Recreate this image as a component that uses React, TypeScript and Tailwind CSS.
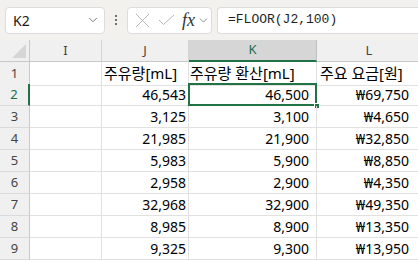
import { ChevronDown } from 'lucide-react';

const rows = [
    { n: 1, j: '주유량[mL]', k: '주유량 환산[mL]', l: '주요 요금[원]', head: true },
    { n: 2, j: '46,543', k: '46,500', l: '₩69,750' },
    { n: 3, j: '3,125', k: '3,100', l: '₩4,650' },
    { n: 4, j: '21,985', k: '21,900', l: '₩32,850' },
    { n: 5, j: '5,983', k: '5,900', l: '₩8,850' },
    { n: 6, j: '2,958', k: '2,900', l: '₩4,350' },
    { n: 7, j: '32,968', k: '32,900', l: '₩49,350' },
    { n: 8, j: '8,985', k: '8,900', l: '₩13,350' },
    { n: 9, j: '9,325', k: '9,300', l: '₩13,950' },
];

const cellFont = { fontFamily: '"Noto Sans", "Noto Sans CJK KR", sans-serif' };

function FormulaBar() {
    return (
        <div className="flex items-center h-10 bg-[#f3f1ee] pl-[5px]">
            {/* Name box */}
            <div className="flex items-center justify-between w-[100px] h-[27px] bg-white border border-[#dcdcdc] rounded-[4px] pl-[7px] pr-[4px]">
                <span className="text-[14px] text-[#1b1b1b]" style={cellFont}>K2</span>
                <ChevronDown className="w-[14px] h-[14px] text-[#666]" strokeWidth={1.5} />
            </div>

            {/* Dots */}
            <div className="flex flex-col items-center gap-[2px] w-[22px]">
                <span className="w-[2px] h-[2px] bg-[#444] rounded-full" />
                <span className="w-[2px] h-[2px] bg-[#444] rounded-full" />
                <span className="w-[2px] h-[2px] bg-[#444] rounded-full" />
            </div>

            {/* Cancel / Enter / fx */}
            <div className="flex items-center w-[85px] h-[27px] bg-white border border-[#dcdcdc] rounded-[4px] pl-[6px]">
                <svg width="15" height="15" viewBox="0 0 15 15" className="ml-[1px]">
                    <path d="M1 1 L14 14 M14 1 L1 14" stroke="#b8b8b8" strokeWidth="1" fill="none" />
                </svg>
                <svg width="17" height="14" viewBox="0 0 17 14" className="ml-[8px]">
                    <path d="M1 7 L5.5 11.5 L16 2" stroke="#b8b8b8" strokeWidth="1" fill="none" />
                </svg>
                <span
                    className="ml-[7px] text-[18px] italic text-[#333] leading-none"
                    style={{ fontFamily: '"Liberation Serif", serif' }}
                >
                    fx
                </span>
                <ChevronDown className="w-[13px] h-[13px] text-[#777] ml-[2px]" strokeWidth={1.5} />
            </div>

            {/* Formula */}
            <div className="flex items-center flex-1 h-[27px] ml-[5px] bg-white border border-[#dcdcdc] border-r-0 rounded-l-[4px] pl-[10px]">
                <span className="text-[13px] text-[#1f1f1f]" style={{ fontFamily: '"Liberation Mono", monospace' }}>
                    =FLOOR(J2,100)
                </span>
            </div>
        </div>
    );
}

function Sheet() {
    const grid = 'grid grid-cols-[30px_72px_87px_128px_104px]';
    return (
        <div className="bg-white overflow-hidden" style={cellFont}>
            {/* Column headers */}
            <div className={`${grid} h-[22px] text-[13px] text-[#444]`}>
                <div className="relative bg-[#f0f0f0] border-r border-b border-[#c8c8c8]">
                    <svg width="14" height="14" viewBox="0 0 14 14" className="absolute right-[3px] bottom-[3px]">
                        <path d="M14 0 L14 14 L0 14 Z" fill="#d6d6d6" />
                    </svg>
                </div>
                <div className="flex items-center justify-center bg-[#f0f0f0] border-r border-b border-[#d4d4d4] border-b-[#c8c8c8]">I</div>
                <div className="flex items-center justify-center bg-[#f0f0f0] border-r border-b border-[#d4d4d4] border-b-[#c8c8c8]">J</div>
                <div className="flex items-center justify-center bg-[#d6d6d6] border-r border-[#c0c0c0] border-b-2 border-b-[#217346] text-[#1e6b48]">K</div>
                <div className="flex items-center justify-center bg-[#f0f0f0] border-b border-[#c8c8c8]">L</div>
            </div>

            {rows.map((r) => {
                const sel = r.n === 2;
                return (
                    <div
                        key={r.n}
                        className={`${grid} h-[22px] text-black ${r.head ? 'text-[15px]' : 'text-[14px]'}`}
                    >
                        <div
                            className={`flex items-center justify-center text-[13px] bg-[#f0f0f0] border-b border-[#dadada] ${
                                sel ? 'border-r-2 border-r-[#217346] text-[#1e6b48]' : 'border-r border-r-[#c8c8c8] text-[#444]'
                            }`}
                        >
                            {r.n}
                        </div>
                        <div className="border-r border-b border-[#e1e1e1]" />
                        <div
                            className={`flex items-center border-r border-b border-[#e1e1e1] whitespace-nowrap ${
                                r.head ? 'justify-start pl-[2px]' : 'justify-end pr-[2px]'
                            }`}
                        >
                            {r.j}
                        </div>
                        <div
                            className={`relative flex items-center border-r border-b border-[#e1e1e1] whitespace-nowrap ${
                                r.head ? 'justify-start pl-[1px]' : 'justify-end pr-[7px]'
                            }`}
                        >
                            {r.k}
                            {sel && (
                                <>
                                    <div className="absolute -left-[1px] -top-[1px] -right-[1px] -bottom-[1px] border-2 border-[#217346]" />
                                    <div className="absolute -right-[4px] -bottom-[4px] w-[6px] h-[6px] bg-[#217346] border border-white" />
                                </>
                            )}
                        </div>
                        <div
                            className={`flex items-center border-b border-[#e1e1e1] whitespace-nowrap ${
                                r.head ? 'justify-start pl-[3px]' : 'justify-end pr-[12px]'
                            }`}
                        >
                            {r.l}
                        </div>
                    </div>
                );
            })}
        </div>
    );
}

export default function App() {
    return (
        <div className="w-[418px] h-[262px] overflow-hidden bg-white">
            <FormulaBar />
            <Sheet />
        </div>
    );
}
